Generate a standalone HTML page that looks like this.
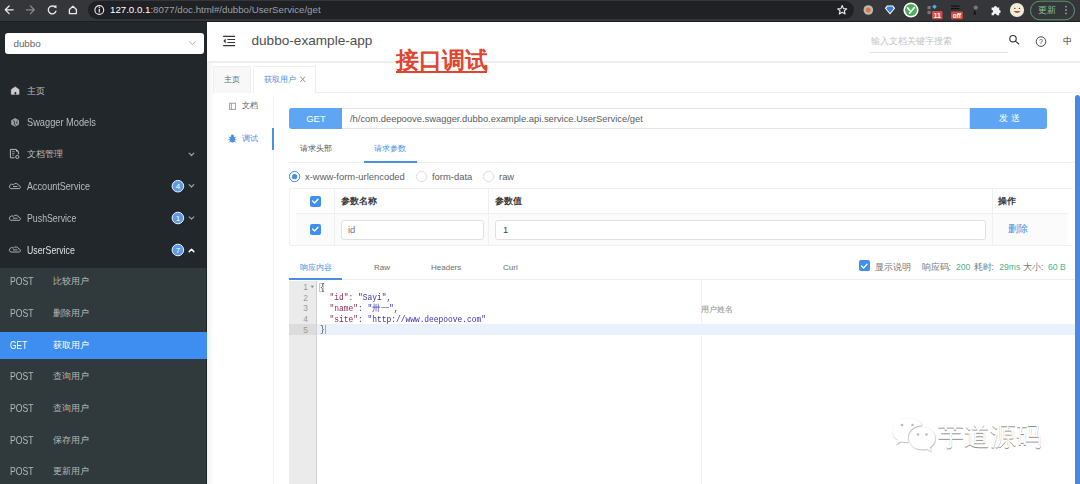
<!DOCTYPE html>
<html><head><meta charset="utf-8">
<style>
*{margin:0;padding:0;box-sizing:border-box}
html,body{width:1080px;height:484px;overflow:hidden;background:#fff;font-family:"Liberation Sans",sans-serif;position:relative}
.a{position:absolute;white-space:nowrap}
#tb{left:0;top:0;width:1080px;height:21.5px;background:#35363a}
#pill{left:88px;top:1.3px;width:766px;height:17.5px;border-radius:9px;background:#202124}
#side{left:0;top:21.5px;width:207px;height:463px;background:#22272c}
#sub{left:0;top:268px;width:207px;height:216px;background:#303a3c}
#sel{left:0;top:332px;width:207px;height:26.6px;background:#3e8ef2}
.mi{color:#b9bcbf;font-size:9.2px;line-height:12px}
.pm{color:#b3b7b9;font-size:9.2px;line-height:12px}
.pl{letter-spacing:-0.45px}
#main{left:207px;top:22.5px;width:873px;height:462px;background:#fff}
</style></head><body>
<div class="a" id="tb"></div>
<div class="a" id="pill"></div>
<div class="a" style="left:110px;top:4px;font-size:9.7px;line-height:12px;color:#9aa0a6"><span style="color:#fff">127.0.0.1</span>:8077/doc.html#/dubbo/UserService/get</div>

<div class="a" id="side"></div>
<div class="a" style="left:0;top:21.4px;width:1080px;height:1.1px;background:#1d1e21"></div>
<div class="a" style="left:5px;top:33px;width:198.8px;height:21px;background:#fff;border-radius:3px"></div>
<div class="a" style="left:13.4px;top:37.5px;font-size:9.9px;line-height:12px;color:#666">dubbo</div>

<div class="a mi" style="left:27px;top:85px">主页</div>
<div class="a mi" style="left:27px;top:117.1px;font-size:10.4px;transform:scaleX(0.89);transform-origin:0 0">Swagger Models</div>
<div class="a mi" style="left:27px;top:148px">文档管理</div>
<div class="a mi" style="left:27px;top:181px;font-size:10.4px;transform:scaleX(0.873);transform-origin:0 0">AccountService</div>
<div class="a mi" style="left:27px;top:213px;font-size:10.4px;transform:scaleX(0.845);transform-origin:0 0">PushService</div>
<div class="a mi" style="left:27px;top:244.6px;color:#dfe1e3;font-size:10.4px;transform:scaleX(0.845);transform-origin:0 0">UserService</div>

<div class="a" id="sub"></div>
<div class="a" style="left:205.6px;top:21.5px;width:1.4px;height:463px;background:#1c2226"></div>
<div class="a" id="sel"></div>
<div class="a pm" style="left:10px;top:275.5px;font-size:10.4px;transform:scaleX(0.834);transform-origin:0 0">POST</div><div class="a pm" style="left:53px;top:275px">比较用户</div>
<div class="a pm" style="left:10px;top:307.5px;font-size:10.4px;transform:scaleX(0.834);transform-origin:0 0">POST</div><div class="a pm" style="left:53px;top:307px">删除用户</div>
<div class="a pm" style="left:10px;top:339.5px;font-size:10.4px;transform:scaleX(0.81);transform-origin:0 0;color:#fff">GET</div><div class="a pm" style="left:53px;top:339px;color:#fff">获取用户</div>
<div class="a pm" style="left:10px;top:370.5px;font-size:10.4px;transform:scaleX(0.834);transform-origin:0 0">POST</div><div class="a pm" style="left:53px;top:370px">查询用户</div>
<div class="a pm" style="left:10px;top:402.5px;font-size:10.4px;transform:scaleX(0.834);transform-origin:0 0">POST</div><div class="a pm" style="left:53px;top:402px">查询用户</div>
<div class="a pm" style="left:10px;top:434.5px;font-size:10.4px;transform:scaleX(0.834);transform-origin:0 0">POST</div><div class="a pm" style="left:53px;top:434px">保存用户</div>
<div class="a pm" style="left:10px;top:465.5px;font-size:10.4px;transform:scaleX(0.834);transform-origin:0 0">POST</div><div class="a pm" style="left:53px;top:465px">更新用户</div>

<div class="a" id="main"></div>
<div class="a" style="left:207px;top:62px;width:7px;height:422px;background:linear-gradient(to right,rgba(40,70,100,0.08),rgba(40,70,100,0))"></div>
<!-- header -->
<div class="a" style="left:207px;top:60.5px;width:873px;height:2px;background:#eceef1"></div>
<div class="a" style="left:251.5px;top:33px;font-size:13.6px;line-height:16px;color:#4f4f4f">dubbo-example-app</div>
<div class="a" style="left:396px;top:46.8px;font-size:22.8px;line-height:26px;color:#df4430;font-weight:bold">接口调试</div>
<div class="a" style="left:395.5px;top:71px;width:91.5px;height:1.6px;background:#df4430"></div>
<div class="a" style="left:870.5px;top:35px;font-size:9.2px;line-height:12px;color:#c4c4c4">输入文档关键字搜索</div>
<div class="a" style="left:870px;top:52px;width:138px;height:1px;background:#e2e2e2"></div>
<div class="a" style="left:1062.5px;top:34.5px;font-size:9.3px;line-height:12px;color:#333">中</div>

<!-- tabs -->
<div class="a" style="left:212.5px;top:66px;width:38px;height:26.5px;background:#f8f8f8;border:1px solid #eee;border-bottom:none;border-radius:2px 2px 0 0"></div>
<div class="a" style="left:224px;top:73.8px;font-size:7.7px;line-height:12px;color:#666">主页</div>
<div class="a" style="left:253px;top:66px;width:63px;height:27px;background:#fff;border:1px solid #eee;border-bottom:none;border-radius:2px 2px 0 0"></div>
<div class="a" style="left:263.9px;top:73.6px;font-size:7.7px;line-height:12px;color:#4a90e2">获取用户</div>
<div class="a" style="left:315px;top:92px;width:765px;height:1px;background:#eee"></div>

<!-- left doc nav -->
<div class="a" style="left:272.5px;top:95px;width:1px;height:389px;background:#eef0f2"></div>
<div class="a" style="left:271.5px;top:128px;width:2px;height:22px;background:#4a90e2"></div>
<div class="a" style="left:242px;top:100.2px;font-size:7.8px;line-height:12px;color:#555">文档</div>
<div class="a" style="left:242px;top:133px;font-size:7.8px;line-height:12px;color:#4a90e2">调试</div>

<!-- url bar -->
<div class="a" style="left:289.3px;top:108px;width:52.7px;height:21px;background:#5ea6f3;border-radius:3px 0 0 3px"></div>
<div class="a" style="left:289.5px;top:113px;width:53px;text-align:center;font-size:9.5px;line-height:12px;color:#fff">GET</div>
<div class="a" style="left:342px;top:108px;width:628px;height:21px;border:1px solid #e4e4e4;border-left:none"></div>
<div class="a" style="left:350px;top:113px;font-size:9.39px;line-height:12px;color:#5c5c5c">/h/com.deepoove.swagger.dubbo.example.api.service.UserService/get</div>
<div class="a" style="left:970px;top:108px;width:77px;height:21px;background:#5ea6f3;border-radius:0 3px 3px 0"></div>
<div class="a" style="left:972px;top:111.8px;width:77px;text-align:center;font-size:9.4px;line-height:12px;color:#fff;letter-spacing:3px">发送</div>

<!-- scrollbar -->
<div class="a" style="left:1074.7px;top:94.8px;width:5.3px;height:390px;background:#4b89d9;border-radius:2.6px 2.6px 0 0"></div>

<!-- request tabs -->
<div class="a" style="left:300.4px;top:143.4px;font-size:8px;line-height:12px;color:#555">请求头部</div>
<div class="a" style="left:374.4px;top:143.4px;font-size:8px;line-height:12px;color:#4a90e2">请求参数</div>
<div class="a" style="left:289px;top:162px;width:786px;height:1px;background:#eceef0"></div>
<div class="a" style="left:364px;top:161px;width:53px;height:2px;background:#4a90e2"></div>

<!-- radios -->
<div class="a" style="left:289px;top:171px;width:11px;height:11px;border-radius:50%;border:1px solid #4a90e2;background:#fff"></div>
<div class="a" style="left:292px;top:174px;width:5px;height:5px;border-radius:50%;background:#4a90e2"></div>
<div class="a" style="left:305px;top:170.5px;font-size:9.42px;line-height:12px;color:#5e5e5e">x-www-form-urlencoded</div>
<div class="a" style="left:416px;top:171px;width:11px;height:11px;border-radius:50%;border:1px solid #dcdcdc;background:#fff"></div>
<div class="a" style="left:432px;top:170.5px;font-size:9.42px;line-height:12px;color:#5e5e5e">form-data</div>
<div class="a" style="left:483px;top:171px;width:11px;height:11px;border-radius:50%;border:1px solid #dcdcdc;background:#fff"></div>
<div class="a" style="left:499px;top:170.5px;font-size:9.42px;line-height:12px;color:#5e5e5e">raw</div>

<!-- table -->
<div class="a" style="left:289px;top:188px;width:784px;height:58px;border:1px solid #eef0f2;border-right:none;border-radius:3px 0 0 3px"></div>
<div class="a" style="left:296px;top:213px;width:771px;height:32px;background:#fbfbfb"></div>
<div class="a" style="left:296px;top:213px;width:772px;height:1px;background:#eef0f2"></div>
<div class="a" style="left:334px;top:189px;width:1px;height:56px;background:#eef0f2"></div>
<div class="a" style="left:488px;top:189px;width:1px;height:56px;background:#eef0f2"></div>
<div class="a" style="left:991.5px;top:189px;width:1px;height:56px;background:#eef0f2"></div>
<div class="a" style="left:309.5px;top:195.5px;width:11px;height:11px;border-radius:2px;background:#3f8fee"></div>
<div class="a" style="left:309.5px;top:223.5px;width:11px;height:11px;border-radius:2px;background:#3f8fee"></div>
<div class="a" style="left:340.5px;top:195px;font-size:9px;line-height:12px;color:#3a3a3a;font-weight:700">参数名称</div>
<div class="a" style="left:494.5px;top:195px;font-size:9px;line-height:12px;color:#3a3a3a;font-weight:700">参数值</div>
<div class="a" style="left:998px;top:195px;font-size:9px;line-height:12px;color:#3a3a3a;font-weight:700">操作</div>
<div class="a" style="left:340.5px;top:219.5px;width:143px;height:20.5px;border:1px solid #dfe1e4;border-radius:3px;background:#fff"></div>
<div class="a" style="left:348px;top:224px;font-size:9.4px;line-height:12px;color:#777">id</div>
<div class="a" style="left:494.5px;top:219.5px;width:491px;height:20.5px;border:1px solid #dfe1e4;border-radius:3px;background:#fff"></div>
<div class="a" style="left:503px;top:224px;font-size:9.4px;line-height:12px;color:#444">1</div>
<div class="a" style="left:1007.5px;top:222.6px;font-size:9.6px;line-height:12px;color:#4a90e2">删除</div>

<!-- response tabs -->
<div class="a" style="left:300px;top:261.6px;font-size:8px;line-height:12px;color:#4a90e2">响应内容</div>
<div class="a" style="left:374px;top:261.6px;font-size:8px;line-height:12px;color:#6e6e6e">Raw</div>
<div class="a" style="left:431px;top:261.6px;font-size:8px;line-height:12px;color:#6e6e6e">Headers</div>
<div class="a" style="left:503px;top:261.6px;font-size:8px;line-height:12px;color:#6e6e6e">Curl</div>
<div class="a" style="left:289px;top:279px;width:786px;height:1px;background:#eceef0"></div>
<div class="a" style="left:289px;top:278px;width:53px;height:2px;background:#4a90e2"></div>
<div class="a" style="left:859px;top:260px;width:11px;height:11px;border-radius:2px;background:#3f8fee"></div>
<div class="a" style="left:875px;top:260.5px;font-size:9px;line-height:12px;color:#777">显示说明</div>
<div class="a" style="left:921.5px;top:260.5px;font-size:8.6px;line-height:12px;color:#777">响应码:</div>
<div class="a" style="left:956px;top:260.5px;font-size:8.6px;line-height:12px;color:#4db384">200</div>
<div class="a" style="left:973.5px;top:260.5px;font-size:8.6px;line-height:12px;color:#777">耗时:</div>
<div class="a" style="left:999.3px;top:260.5px;font-size:8.6px;line-height:12px;color:#4db384">29ms</div>
<div class="a" style="left:1023px;top:260.5px;font-size:8.6px;line-height:12px;color:#777">大小:</div>
<div class="a" style="left:1048px;top:260.5px;font-size:8.6px;line-height:12px;color:#4db384">60 B</div>

<!-- editor -->
<div class="a" style="left:319.3px;top:282.6px;width:4.8px;height:9.6px;border:1px solid #c8c8c8"></div>
<div class="a" style="left:701px;top:280px;width:1px;height:204px;background:#eef0f2"></div>
<div class="a" style="left:289px;top:281px;width:28px;height:203px;background:#ebebeb"></div>
<div class="a" style="left:316px;top:281px;width:1px;height:203px;background:#d0d0d0"></div>
<div class="a" style="left:289px;top:324.3px;width:27px;height:10.3px;background:#dcdcdc"></div>
<div class="a" style="left:317px;top:324.3px;width:758px;height:10.3px;background:#e9f1fc"></div>
<div class="a" style="left:324.6px;top:324.6px;width:1px;height:9.6px;background:#aaa"></div>
<div class="a" style="left:700.8px;top:303.5px;font-size:7.8px;line-height:12px;color:#8a8a8a">用户姓名</div>
<pre class="a" style="white-space:pre;left:320px;top:282.7px;font-family:'Liberation Mono',monospace;font-size:8.5px;line-height:10.65px;color:#444;transform:scaleX(0.93);transform-origin:0 0"><span>{</span>
  <span style="color:#8e2a55">"id"</span>: <span style="color:#3535b0">"Sayi"</span>,
  <span style="color:#8e2a55">"name"</span>: <span style="color:#3535b0">"卅一"</span>,
  <span style="color:#8e2a55">"site"</span>: <span style="color:#3535b0">"http://www.deepoove.com"</span>
}</pre>
<pre class="a" style="white-space:pre;left:289px;top:282px;width:19px;text-align:right;font-family:'Liberation Sans',sans-serif;font-size:8.4px;line-height:10.65px;color:#999">1
2
3
4
5</pre>

<!-- toolbar icons -->
<svg class="a" style="left:0;top:0" width="1080" height="21" viewBox="0 0 1080 21">
 <g fill="none" stroke="#e8eaed" stroke-width="1.3" stroke-linecap="round" stroke-linejoin="round">
  <path d="M13.2 9.8H5.3 M9.1 6 L5.3 9.8 L9.1 13.6"/>
  <path d="M26.4 9.8H34.3 M30.5 6 L34.3 9.8 L30.5 13.6" stroke="#86888c"/>
  <path d="M55.2 7.4 A3.9 3.9 0 1 0 55.9 11.2"/>
  <path d="M69.4 9.5 L72.9 6.3 L76.4 9.5 V13.6 H69.4 Z"/>
  <path d="M842.2 5.5 L843.5 8.6 L846.7 8.8 L844.3 10.9 L845.1 14 L842.2 12.3 L839.3 14 L840.1 10.9 L837.7 8.8 L840.9 8.6 Z" stroke-width="1.1"/>
 </g>
 <path d="M53.6 5.6 L56.5 5.6 L56.5 8.5 Z" fill="#e8eaed"/>
 <circle cx="868.3" cy="10" r="4.8" fill="#b9b9b9"/><circle cx="868.3" cy="10" r="2.5" fill="#e0773a"/>
 <path d="M887 5.6 H893 L895.2 8.2 L890 14.6 L884.8 8.2 Z" fill="#fff"/><path d="M887.6 6.6 H892.4 L893.8 8.4 L890 13 L886.2 8.4 Z" fill="#3b7fd6"/>
 <circle cx="911" cy="10" r="7.6" fill="#fff"/><circle cx="911" cy="10" r="6" fill="#4fae5c"/>
 <path d="M907.6 7.8 L910.2 11 M914.4 7.6 L909.6 13.2" stroke="#fff" stroke-width="1.6" fill="none" stroke-linecap="round"/>
 <rect x="927.5" y="6" width="3.2" height="3.2" fill="#777"/><rect x="927.5" y="10.8" width="3.2" height="3.2" fill="#777"/>
 <path d="M934.5 4.5 L936.8 6.8 L934.5 9.1 L932.2 6.8 Z" fill="#4ab4e8"/>
 <rect x="932" y="11" width="10.5" height="8.3" rx="1" fill="#d74a43"/>
 <text x="937.2" y="18" font-family="Liberation Sans" font-size="7" fill="#fff" text-anchor="middle" font-weight="bold">11</text>
 <rect x="951" y="5.5" width="8.5" height="1.2" fill="#111"/><rect x="951" y="8" width="8.5" height="1.2" fill="#111"/>
 <rect x="951" y="11.4" width="11.8" height="7.9" rx="1" fill="#d74a43"/>
 <text x="956.9" y="18" font-family="Liberation Sans" font-size="6.5" fill="#fff" text-anchor="middle" font-weight="bold">off</text>
 <circle cx="975.8" cy="7.6" r="2.2" fill="#777"/><path d="M975 9.5 L973.4 14.4 L976 14.4 Z" fill="#111"/>
 <path d="M991.6 7.6 h2.3 a1.5 1.5 0 1 1 3 0 h2.3 v2.4 a1.5 1.5 0 1 1 0 3 v2.2 h-2.5 a1.4 1.4 0 1 0 -2.8 0 h-2.3 v-2.4 a1.5 1.5 0 1 0 0 -3 Z" fill="#f1f3f4"/>
 <circle cx="1017" cy="10" r="7.1" fill="#efecd8"/>
 <circle cx="1014.8" cy="8.4" r="0.65" fill="#333"/><circle cx="1019.4" cy="8.4" r="0.65" fill="#333"/>
 <path d="M1013.6 11 Q1017 14.8 1020.6 11 Z" fill="#c8453a"/>
 <rect x="1030.5" y="1.2" width="44" height="18.6" rx="9.3" fill="none" stroke="#5f9a6c" stroke-width="1"/>
 <circle cx="1066" cy="6.6" r="0.9" fill="#9aa0a6"/><circle cx="1066" cy="10" r="0.9" fill="#9aa0a6"/><circle cx="1066" cy="13.4" r="0.9" fill="#9aa0a6"/>
 <circle cx="99.3" cy="10" r="4.4" fill="none" stroke="#e8eaed" stroke-width="1.1"/>
 <rect x="98.7" y="9" width="1.2" height="3.4" fill="#e8eaed"/><rect x="98.7" y="7" width="1.2" height="1.2" fill="#e8eaed"/>
</svg>
<div class="a" style="left:1038px;top:4px;font-size:8.8px;line-height:12px;color:#86c193">更新</div>

<!-- sidebar icons -->
<svg class="a" style="left:0;top:0" width="207" height="484" viewBox="0 0 207 484">
 <path d="M11.2 89.6 L15.2 86.7 L19.1 89.6 V94.4 H11.2 Z" fill="#c9cbcd" stroke="#c9cbcd" stroke-width="0.4" stroke-linejoin="round"/>
 <rect x="14.6" y="92" width="1.6" height="2.6" rx="0.6" fill="#22272c"/>
 <g fill="none" stroke="#b9bcbf" stroke-width="1">
  <path d="M15.1 118 L19 120.2 V124.6 L15.1 126.8 L11.2 124.6 V120.2 Z" fill="#9b9ea1" stroke="none"/>
  <path d="M13 120.5 Q15.5 121 14.5 123 Q13.5 125 16 125.5 M17.4 120.6 Q16 122.5 17.2 124" stroke="#22272c" stroke-width="0.8"/>
  <path d="M16.2 149.4 H10.4 V157.8 H14.6 M16.2 149.4 L18.4 151.6 V154.2"/>
  <path d="M16.2 149.4 L18.4 151.6 H16.2 Z" fill="#e8e8e8" stroke="none"/>
  <path d="M12.2 151.6 H14.6 M12.2 153.4 H14.6 M12.2 155.2 H13.8" stroke-width="0.7"/>
  <circle cx="17.3" cy="156.9" r="1.6"/>
 </g>
 <g fill="none" stroke="#b9bcbf" stroke-width="0.9">
  <path d="M10.6 188.6 H19.6 A1.7 1.7 0 0 0 18.7 185.5 A3 2.7 0 0 0 13.4 184.6 A2.3 2.1 0 0 0 10.6 188.6 Z M13 186.5 H17.4"/>
  <path d="M10.6 220.3 H19.6 A1.7 1.7 0 0 0 18.7 217.2 A3 2.7 0 0 0 13.4 216.3 A2.3 2.1 0 0 0 10.6 220.3 Z M13 218.2 H17.4"/>
  <path d="M10.6 252.0 H19.6 A1.7 1.7 0 0 0 18.7 248.9 A3 2.7 0 0 0 13.4 248.0 A2.3 2.1 0 0 0 10.6 252.0 Z M13 249.9 H17.4"/>
 </g>
 <g fill="none" stroke="#9ea2a6" stroke-width="1.2" stroke-linecap="round" stroke-linejoin="round">
  <path d="M189.2 153.2 L191.5 155.5 L193.8 153.2"/>
  <path d="M189.2 184.7 L191.5 187 L193.8 184.7"/>
  <path d="M189.2 216.9 L191.5 219.2 L193.8 216.9"/>
  <path d="M189.2 251.6 L191.5 249.3 L193.8 251.6" stroke="#fff" stroke-width="1.5"/>
 </g>
 <g fill="#5b9be9" stroke="#fff" stroke-width="0.9">
  <circle cx="177.9" cy="186.2" r="5.8"/>
  <circle cx="177.9" cy="218" r="5.8"/>
  <circle cx="177.9" cy="250" r="5.8"/>
 </g>
 <g font-family="Liberation Sans" font-size="8" fill="#fff" text-anchor="middle">
  <text x="177.9" y="189">4</text><text x="177.9" y="220.8">1</text><text x="177.9" y="252.8">7</text>
 </g>
 <path d="M189.4 41.4 L192.4 44.8 L195.4 41.4" fill="none" stroke="#a0a0a0" stroke-width="0.8"/>
</svg>

<!-- header/tab/nav icons -->
<svg class="a" style="left:0;top:0" width="1080" height="484" viewBox="0 0 1080 484">
 <g stroke="#333" stroke-width="1.1" fill="none">
  <path d="M223.2 36.4H235.1 M227.4 39.5H235.1 M227.4 42.5H235.1 M223.2 45.6H235.1"/>
 </g>
 <path d="M223.4 41 L225.6 38.6 V43.4 Z" fill="#333"/>
 <g stroke="#333" stroke-width="1.1" fill="none" stroke-linecap="round">
  <circle cx="1013" cy="38.7" r="3.2"/>
  <path d="M1015.4 41.1 L1018.8 44"/>
 </g>
 <circle cx="1041" cy="41.6" r="4.8" fill="none" stroke="#333" stroke-width="0.9"/>
 <text x="1041" y="44.4" font-family="Liberation Sans" font-size="7" fill="#333" text-anchor="middle">?</text>
 <path d="M300.2 76.5 L305.2 82 M305.2 76.5 L300.2 82" stroke="#777" stroke-width="0.8" fill="none"/>
 <g fill="none" stroke="#999" stroke-width="0.9">
  <rect x="229.6" y="103.2" width="5.9" height="6.2"/>
  <path d="M231.4 103.2 V109.4"/>
 </g>
 <g fill="#4a90e2">
  <ellipse cx="232.4" cy="139.2" rx="2.6" ry="3.2"/>
  <circle cx="232.4" cy="135.8" r="1.4"/>
 </g>
 <path d="M228.6 137 L230.6 138 M236.2 137 L234.2 138 M228.4 139.6 H230.4 M236.4 139.6 H234.4 M228.8 142.2 L230.6 141.2 M236 142.2 L234.2 141.2" stroke="#4a90e2" stroke-width="0.8"/>
 <circle cx="294.6" cy="176.6" r="5.1" fill="#fff" stroke="#4a90e2" stroke-width="0.9"/>
 <circle cx="294.6" cy="176.6" r="2.7" fill="#4a90e2"/>
 <circle cx="421.6" cy="176.6" r="5.1" fill="#fff" stroke="#dcdfe2" stroke-width="0.9"/>
 <circle cx="488.6" cy="176.6" r="5.1" fill="#fff" stroke="#dcdfe2" stroke-width="0.9"/>
 <g stroke="#fff" stroke-width="1.3" fill="none" stroke-linecap="round" stroke-linejoin="round">
  <path d="M312.6 201 L314.6 203 L318 199.2"/>
  <path d="M312.6 229 L314.6 231 L318 227.2"/>
  <path d="M861.6 266 L863.6 268 L867 264.2"/>
 </g>
</svg>

<!-- watermark -->
<svg class="a" style="left:885px;top:410px" width="60" height="50" viewBox="0 0 60 50">
 <defs><filter id="sh" x="-20%" y="-20%" width="140%" height="140%"><feDropShadow dx="0.4" dy="0.6" stdDeviation="0.5" flood-color="#888" flood-opacity="0.9"/></filter></defs>
 <g filter="url(#sh)" fill="#fff">
  <path d="M21.8 8 C13 8 7 13.5 7 20.5 C7 24.5 9 27.6 12.3 29.8 L10.8 34.5 L16 31.5 C17.8 32 19.6 32.3 21.5 32.3 C22.3 32.3 23 32.2 23.5 32.2 C23 30.8 22.8 29.5 22.8 28 C22.8 21 29.2 15.5 37 15.5 C36.2 11 29.8 8 21.8 8 Z"/>
  <path d="M37.2 17 C29.8 17 24 22 24 28.3 C24 34.6 29.8 39.6 37.2 39.6 C38.8 39.6 40.3 39.4 41.7 38.9 L46.2 41.5 L45 37.5 C48.3 35.4 50.3 32 50.3 28.3 C50.3 22 44.6 17 37.2 17 Z"/>
 </g>
 <g fill="#bbb"><circle cx="17" cy="15" r="1.3"/><circle cx="27.5" cy="15" r="1.3"/><circle cx="33" cy="24.5" r="1.2"/><circle cx="41.5" cy="24.5" r="1.2"/></g>
</svg>
<div class="a" style="left:937.5px;top:419.6px;font-size:26px;line-height:32px;color:#fff;text-shadow:0.5px 0.7px 0.6px #8a8a8a;letter-spacing:0px">芋道源码</div>
<svg class="a" style="left:310px;top:285px" width="5" height="4"><path d="M0.6 0.8 H4 L2.3 3 Z" fill="#888"/></svg>
</body></html>
